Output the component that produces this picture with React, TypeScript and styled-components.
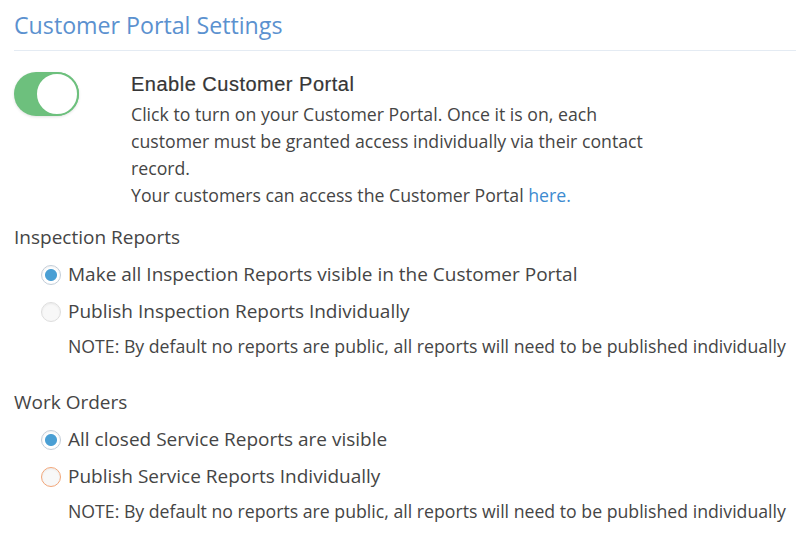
import styled, { createGlobalStyle } from "styled-components";

const GlobalStyle = createGlobalStyle`
    body {
        margin: 0;
        background: #ffffff;
        font-family: "Open Sans", "Liberation Sans", sans-serif;
        color: #454545;
    }
`;

type Choice = { label: string, checked?: boolean, focused?: boolean };

const sections: { title: string, choices: Choice[] }[] = [
    {
        title: "Inspection Reports",
        choices: [
            { label: "Make all Inspection Reports visible in the Customer Portal", checked: true },
            { label: "Publish Inspection Reports Individually" },
        ],
    },
    {
        title: "Work Orders",
        choices: [
            { label: "All closed Service Reports are visible", checked: true },
            { label: "Publish Service Reports Individually", focused: true },
        ],
    },
];

const note = "NOTE: By default no reports are public, all reports will need to be published individually";

export default function App() {
    return (
        <>
            <GlobalStyle />
            <StyledPage>
                <StyledTitle>Customer Portal Settings</StyledTitle>
                <StyledEnableRow>
                    <StyledToggle $on={true}>
                        <StyledKnob />
                    </StyledToggle>
                    <StyledEnableText>
                        <StyledEnableHeading>Enable Customer Portal</StyledEnableHeading>
                        <StyledDescription>
                            Click to turn on your Customer Portal. Once it is on, each customer must be granted access individually via their contact record.
                            <br />
                            Your customers can access the Customer Portal <StyledLink href="#">here.</StyledLink>
                        </StyledDescription>
                    </StyledEnableText>
                </StyledEnableRow>
                {sections.map((section) => (
                    <StyledSection key={section.title}>
                        <StyledSectionTitle>{section.title}</StyledSectionTitle>
                        <StyledChoices>
                            {section.choices.map((choice) => (
                                <StyledChoice key={choice.label}>
                                    <StyledRadio $checked={choice.checked} $focused={choice.focused} />
                                    <span>{choice.label}</span>
                                </StyledChoice>
                            ))}
                            <StyledNote>{note}</StyledNote>
                        </StyledChoices>
                    </StyledSection>
                ))}
            </StyledPage>
        </>
    )
};

const StyledPage = styled.div`
    padding: 8px 0 0 14px;
    width: 796px;
    box-sizing: border-box;
`;

const StyledTitle = styled.h1`
    margin: 0;
    padding-bottom: 7px;
    border-bottom: 1px solid #e4ebf3;
    font-size: 23.2px;
    line-height: 35px;
    font-weight: 400;
    color: #5b91cf;
`;

const StyledEnableRow = styled.div`
    display: flex;
    gap: 52px;
    padding-top: 21px;
`;

const StyledToggle = styled.div<{ $on: boolean }>`
    flex: none;
    display: flex;
    justify-content: ${props => props.$on ? "flex-end" : "flex-start"};
    width: 65px;
    height: 44px;
    border-radius: 22px;
    background: ${props => props.$on ? "#6dc07d" : "#e5e5e5"};
    box-shadow: 0 1px 3px rgba(0, 0, 0, 0.12);
    box-sizing: border-box;
`;

const StyledKnob = styled.div`
    width: 44px;
    height: 44px;
    border-radius: 50%;
    background: #ffffff;
    border: 2px solid #6dc07d;
    box-sizing: border-box;
`;

const StyledEnableText = styled.div`
    width: 525px;
`;

const StyledEnableHeading = styled.div`
    font-family: "Liberation Sans", Arial, sans-serif;
    font-size: 20px;
    line-height: 24px;
    letter-spacing: 0.5px;
    color: #363636;
    -webkit-text-stroke: 0.2px #363636;
`;

const StyledDescription = styled.div`
    margin-top: 5px;
    font-size: 17.7px;
    line-height: 27px;
`;

const StyledLink = styled.a`
    color: #3d8bd0;
    text-decoration: none;
`;

const StyledSection = styled.div`
    margin-top: 15px;
    & + & {
        margin-top: 31px;
    }
`;

const StyledSectionTitle = styled.div`
    font-size: 19px;
    line-height: 26px;
`;

const StyledChoices = styled.div`
    display: flex;
    flex-direction: column;
    gap: 10px;
    padding: 11px 0 0 27px;
    & > :last-child {
        margin-top: -1px;
    }
`;

const StyledChoice = styled.label`
    display: flex;
    align-items: center;
    gap: 7px;
    font-size: 19px;
    line-height: 27px;
`;

const StyledRadio = styled.span<{ $checked?: boolean, $focused?: boolean }>`
    flex: none;
    width: 20px;
    height: 20px;
    border-radius: 50%;
    box-sizing: border-box;
    border: 1px solid ${props => props.$focused ? "#f2a679" : props.$checked ? "#c3cdd8" : "#dedede"};
    background: ${props => props.$checked ? "radial-gradient(circle, #4a9fd4 0 5.5px, #ffffff 6.5px)" : "#f8f8f8"};
    box-shadow: inset 0 1px 2px rgba(0, 0, 0, 0.06);
`;

const StyledNote = styled.div`
    padding-left: 27px;
    font-size: 17.7px;
    line-height: 24px;
`;
